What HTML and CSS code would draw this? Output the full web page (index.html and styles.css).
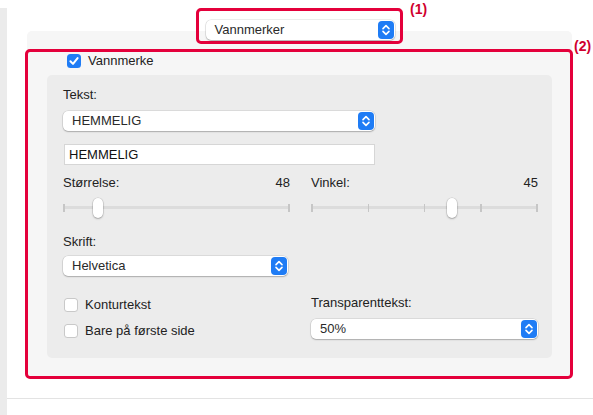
FILE: index.html
```html
<!DOCTYPE html>
<html lang="no">
<head>
<meta charset="utf-8">
<title>Vannmerker</title>
<link rel="stylesheet" href="styles.css">
</head>
<body>
<div class="window">
  <div class="sidebar"></div>
  <div class="main">
    <div class="content">
      <div class="tab-row">
        <div class="popup popup-tab">
          <span class="popup-text">Vannmerker</span>
          <svg class="stepper" viewBox="0 0 16 18" width="16" height="18"><rect x="0" y="0" width="16" height="18" rx="4" fill="#1f7cf5"/><path d="M5 7.6 L8 4.6 L11 7.6 M5 10.4 L8 13.4 L11 10.4" fill="none" stroke="#fff" stroke-width="1.6" stroke-linecap="round" stroke-linejoin="round"/></svg>
        </div>
      </div>
      <div class="panel">
        <div class="check-row enable-row">
          <span class="checkbox checked"><svg viewBox="0 0 14 14" width="14" height="14"><path d="M3.4 7.3 L6 9.9 L10.6 4.1" fill="none" stroke="#fff" stroke-width="2" stroke-linecap="round" stroke-linejoin="round"/></svg></span>
          <span class="check-label">Vannmerke</span>
        </div>
        <div class="group">
          <div class="section">
            <div class="label">Tekst:</div>
            <div class="popup popup-text-select">
              <span class="popup-text">HEMMELIG</span>
              <svg class="stepper" viewBox="0 0 16 18" width="16" height="18"><rect x="0" y="0" width="16" height="18" rx="4" fill="#1f7cf5"/><path d="M5 7.6 L8 4.6 L11 7.6 M5 10.4 L8 13.4 L11 10.4" fill="none" stroke="#fff" stroke-width="1.6" stroke-linecap="round" stroke-linejoin="round"/></svg>
            </div>
            <div class="textfield">HEMMELIG</div>
          </div>

          <div class="section two-col sliders">
            <div class="col">
              <div class="label-row"><span class="label">Størrelse:</span><span class="label value">48</span></div>
              <div class="slider">
                <span class="track"></span>
                <span class="tick" style="left:0%"></span>
                <span class="tick" style="left:100%"></span>
                <span class="thumb" style="left:13.3%"></span>
              </div>
            </div>
            <div class="col">
              <div class="label-row"><span class="label">Vinkel:</span><span class="label value">45</span></div>
              <div class="slider">
                <span class="track"></span>
                <span class="tick" style="left:0%"></span>
                <span class="tick" style="left:25%"></span>
                <span class="tick" style="left:50%"></span>
                <span class="tick" style="left:75%"></span>
                <span class="tick" style="left:100%"></span>
                <span class="thumb" style="left:60.4%"></span>
              </div>
            </div>
          </div>

          <div class="section font-section">
            <div class="label">Skrift:</div>
            <div class="popup popup-font">
              <span class="popup-text">Helvetica</span>
              <svg class="stepper" viewBox="0 0 16 18" width="16" height="18"><rect x="0" y="0" width="16" height="18" rx="4" fill="#1f7cf5"/><path d="M5 7.6 L8 4.6 L11 7.6 M5 10.4 L8 13.4 L11 10.4" fill="none" stroke="#fff" stroke-width="1.6" stroke-linecap="round" stroke-linejoin="round"/></svg>
            </div>
          </div>

          <div class="section two-col bottom">
            <div class="col checks">
              <div class="check-row"><span class="checkbox"></span><span class="check-label">Konturtekst</span></div>
              <div class="check-row"><span class="checkbox"></span><span class="check-label">Bare på første side</span></div>
            </div>
            <div class="col">
              <div class="label">Transparenttekst:</div>
              <div class="popup popup-transp">
                <span class="popup-text">50%</span>
                <svg class="stepper" viewBox="0 0 16 18" width="16" height="18"><rect x="0" y="0" width="16" height="18" rx="4" fill="#1f7cf5"/><path d="M5 7.6 L8 4.6 L11 7.6 M5 10.4 L8 13.4 L11 10.4" fill="none" stroke="#fff" stroke-width="1.6" stroke-linecap="round" stroke-linejoin="round"/></svg>
              </div>
            </div>
          </div>
        </div>
      </div>
    </div>
    <div class="footer-line"></div>
  </div>

  <div class="annot-box box1"></div>
  <span class="annot-label label1">(1)</span>
  <div class="annot-box box2"></div>
  <span class="annot-label label2">(2)</span>
</div>
</body>
</html>
```

FILE: styles.css
```css
* { box-sizing: border-box; }

html, body {
  margin: 0;
  padding: 0;
  background: #ffffff;
}

body {
  font-family: "Liberation Sans", Arial, sans-serif;
  font-size: 13px;
  color: #222222;
}

.window {
  position: relative;
  width: 593px;
  height: 415px;
  display: flex;
  overflow: hidden;
}

.sidebar {
  width: 7px;
  margin-top: 8px;
  background: #ebebeb;
  flex: none;
}

.main {
  flex: 1;
  display: flex;
  flex-direction: column;
}

.content {
  padding: 0 21px 0 20px;
}

.tab-row {
  margin-top: 20px;
  height: 20px;
  display: flex;
  justify-content: center;
  position: relative;
  z-index: 1;
}

/* popup buttons */
.popup {
  height: 20px;
  background: #ffffff;
  border-radius: 5px;
  box-shadow: 0 0 0 0.5px rgba(0, 0, 0, 0.14), 0 1px 1.5px rgba(0, 0, 0, 0.22);
  display: flex;
  align-items: center;
  justify-content: space-between;
  padding: 0 1px 0 9px;
  line-height: 20px;
  color: #2a2a2a;
}

.popup .stepper {
  display: block;
  flex: none;
}

.popup-tab { width: 189px; margin-left: 1px; }
.popup-text-select { width: 312px; margin-top: 8px; }
.popup-font { width: 225px; margin-top: 6px; }
.popup-transp { width: 227px; margin-top: 8px; }

.panel {
  margin-top: -9px;
  background: #f6f6f6;
  border-radius: 5px;
  padding: 22px 20px 18px 20px;
}

.check-row {
  display: flex;
  align-items: center;
  height: 16px;
  line-height: 16px;
}

.enable-row {
  padding-left: 20px;
}

.checkbox {
  width: 14px;
  height: 14px;
  border-radius: 3.5px;
  background: #ffffff;
  box-shadow: inset 0 0 0 1px #c9c9c9;
  flex: none;
  display: block;
}

.checkbox.checked {
  background: #1f7cf5;
  box-shadow: none;
}

.checkbox svg { display: block; }

.enable-row .check-label { margin-left: 7px; }
.checks .check-label { margin-left: 7px; }

.group {
  margin-top: 6px;
  background: #ececec;
  border-radius: 5px;
  height: 283px;
  padding: 12px 14px 19px 16px;
}

.label {
  line-height: 16px;
  height: 16px;
  color: #222222;
}

.textfield {
  width: 311px;
  margin-left: 1px;
  margin-top: 13px;
  height: 21px;
  background: #ffffff;
  border: 1px solid #d6d6d6;
  padding: 0 4px;
  line-height: 19px;
  color: #111111;
}

.two-col {
  display: grid;
  grid-template-columns: 227px 227px;
  column-gap: 21px;
}

.sliders { margin-top: 10px; }

.label-row {
  display: flex;
  justify-content: space-between;
}

.slider {
  position: relative;
  height: 20px;
  margin: 7px 1px 0 1px;
}

.track {
  position: absolute;
  left: 0;
  right: 0;
  top: 8px;
  height: 3px;
  background: #dcdcdc;
  border-radius: 1.5px;
}

.tick {
  position: absolute;
  top: 6px;
  width: 1.5px;
  height: 8px;
  margin-left: -0.75px;
  background: #c6c6c6;
}

.thumb {
  position: absolute;
  top: 0;
  width: 10px;
  height: 20px;
  margin-left: -1px;
  background: #ffffff;
  border-radius: 5px;
  box-shadow: 0 0 0 0.5px rgba(0, 0, 0, 0.15), 0 1px 2px rgba(0, 0, 0, 0.25);
}

.font-section { margin-top: 16px; }

.bottom { margin-top: 19px; }

.checks {
  display: flex;
  flex-direction: column;
  gap: 10px;
  padding-top: 2px;
}

.checks .checkbox { margin-left: 1px; }

.footer-line {
  margin-top: 22px;
  height: 1px;
  background: #e3e3e3;
}

/* annotation overlays */
.annot-box {
  position: absolute;
  border: 3px solid #e4003b;
  border-radius: 5px;
  pointer-events: none;
}

.box1 {
  left: 196px;
  top: 8px;
  width: 207px;
  height: 36px;
}

.box2 {
  left: 25px;
  top: 49px;
  width: 548px;
  height: 330px;
}

.annot-label {
  position: absolute;
  font-weight: bold;
  font-size: 14px;
  line-height: 16px;
  color: #d0002e;
}

.label1 { left: 410px; top: 1px; }
.label2 { left: 574px; top: 38px; }
```
